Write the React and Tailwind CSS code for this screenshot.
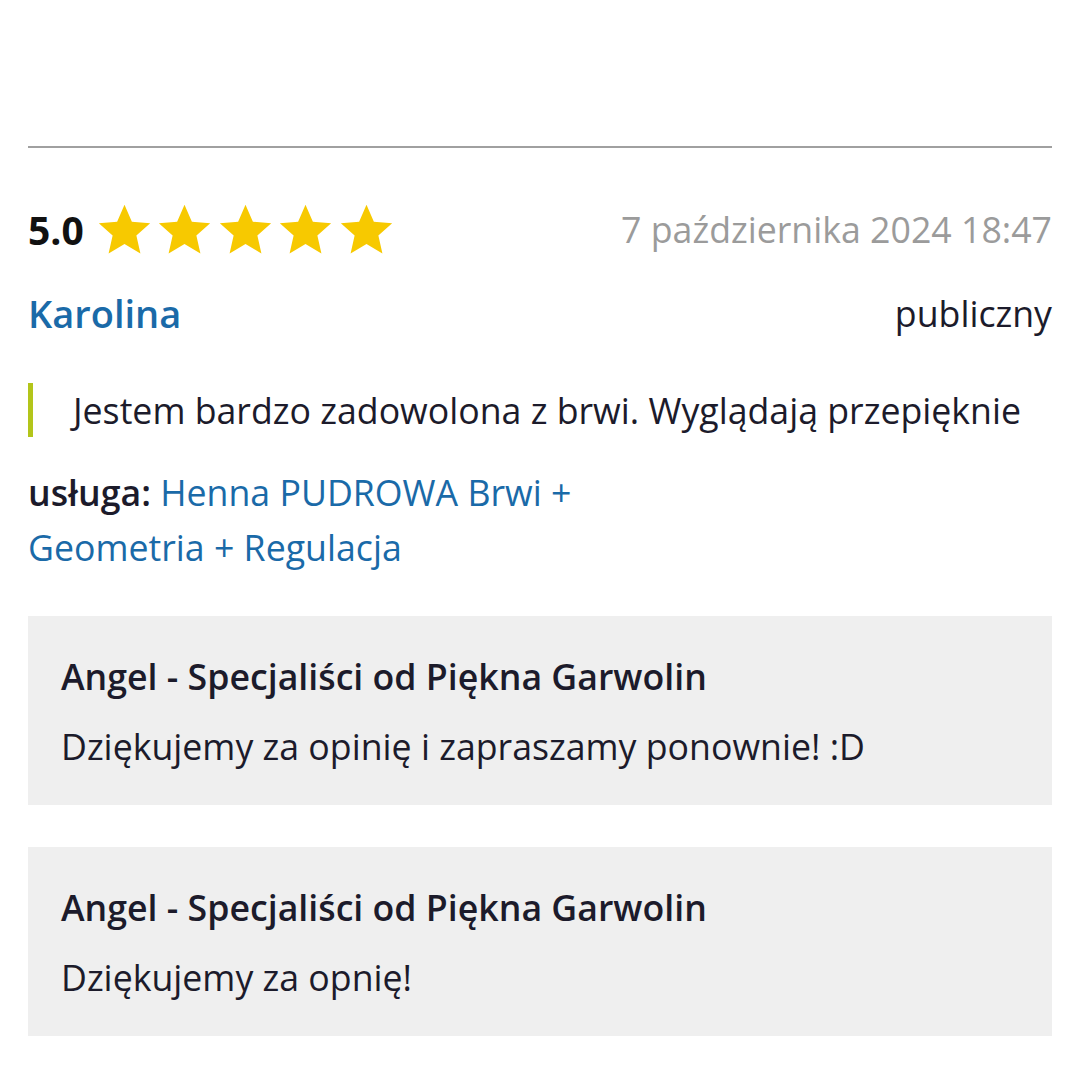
import React from 'react';

function Star() {
  return (
    <svg viewBox="0 0 24 24" className="w-[57px] h-[57px]">
      <path
        d="M12 1.6l3.1 7.1 7.7.7-5.8 5.1 1.7 7.6L12 18.1l-6.7 4 1.7-7.6-5.8-5.1 7.7-.7z"
        fill="#f7c900"
      />
    </svg>
  );
}

function Reply({ author, text }) {
  return (
    <div className="bg-[#efefef] px-[33px] pt-[38px] pb-[37px]">
      <p className="text-[35.7px] leading-[44px] font-semibold text-[#1c1b2b]">{author}</p>
      <p className="mt-[26px] text-[35.7px] leading-[44px] text-[#1c1b2b]">{text}</p>
    </div>
  );
}

export default function App() {
  const replies = [
    { author: 'Angel - Specjaliści od Piękna Garwolin', text: 'Dziękujemy za opinię i zapraszamy ponownie! :D' },
    { author: 'Angel - Specjaliści od Piękna Garwolin', text: 'Dziękujemy za opnię!' },
  ];

  return (
    <div className="w-[1080px] h-[1080px] bg-white px-[28px] pt-[146px] font-['Open_Sans',sans-serif] overflow-hidden">
      <div className="border-t-2 border-[#a0a0a0]"></div>

      {/* rating + date */}
      <div className="mt-[53px] h-[57px] flex items-center justify-between">
        <div className="flex items-center">
          <span className="text-[39px] font-bold text-[#111] leading-none mr-[12px]">5.0</span>
          <div className="flex gap-[3.5px]">
            <Star />
            <Star />
            <Star />
            <Star />
            <Star />
          </div>
        </div>
        <span className="text-[35.7px] leading-none text-[#9b9b9b]">7 października 2024 18:47</span>
      </div>

      <div className="mt-[29px] h-[52px] flex items-center justify-between">
        <span className="text-[38px] leading-[52px] font-semibold text-[#1a6aa8]">Karolina</span>
        <span className="text-[35.7px] leading-[52px] text-[#1c1b2b]">publiczny</span>
      </div>

      <div className="mt-[44px] border-l-[5px] border-[#b3c51a] pl-[40px]">
        <p className="text-[35.7px] leading-[54px] text-[#1c1b2b]">
          Jestem bardzo zadowolona z brwi. Wyglądają przepięknie
        </p>
      </div>

      <p className="mt-[28px] w-[600px] text-[35.7px] leading-[55px]">
        <span className="font-semibold text-[#1c1b2b]">usługa:</span>{' '}
        <span className="text-[#1a6aa8]">Henna PUDROWA Brwi + Geometria + Regulacja</span>
      </p>

      <div className="mt-[41px] flex flex-col gap-[42px]">
        {replies.map((r, i) => (
          <Reply key={i} author={r.author} text={r.text} />
        ))}
      </div>
    </div>
  );
}
